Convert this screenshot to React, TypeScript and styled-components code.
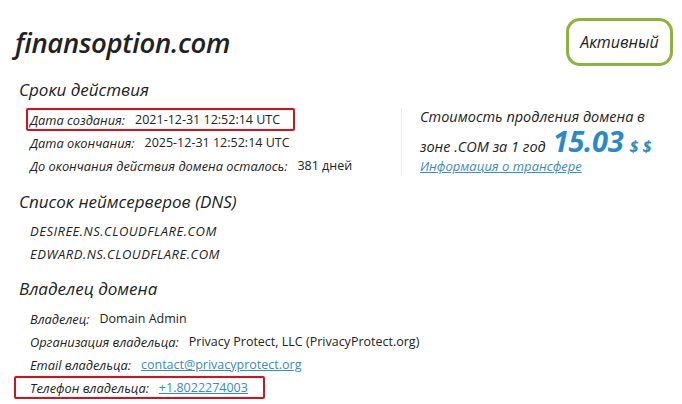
import styled, { createGlobalStyle } from 'styled-components';

const GlobalStyle = createGlobalStyle`
  html, body {
    margin: 0;
    padding: 0;
    background: #ffffff;
  }
  body {
    font-family: 'Open Sans', 'Liberation Sans', sans-serif;
    color: #222222;
  }
`;

const Page = styled.div`
  width: 682px;
  height: 404px;
  box-sizing: border-box;
  padding: 18px 9px 0 14px;
  overflow: hidden;
`;

const Header = styled.header`
  display: flex;
  justify-content: space-between;
  align-items: center;
  height: 48px;
`;

const DomainName = styled.h1`
  margin: 0 0 0 1px;
  font-size: 27.5px;
  font-weight: 600;
  font-style: italic;
  letter-spacing: -0.3px;
  color: #222222;
`;

const StatusBadge = styled.div`
  box-sizing: border-box;
  width: 107px;
  height: 48px;
  display: flex;
  align-items: center;
  justify-content: center;
  border: 3px solid #8cb33c;
  border-radius: 14px;
  font-size: 16px;
  font-style: italic;
  color: #222222;
`;

const SectionTitle = styled.h2<{ $gap: number }>`
  margin: ${(p) => p.$gap}px 0 0 5px;
  font-size: 17px;
  line-height: 24px;
  font-weight: 400;
  font-style: italic;
  color: #222222;
`;

const TermsRow = styled.div`
  display: flex;
  margin-top: 6px;
`;

const List = styled.div`
  width: 375px;
  margin-left: 12px;
  margin-top: 6px;
`;

const TermsList = styled(List)`
  margin-top: 0;
`;

const Row = styled.div<{ $mark?: 'tight' | 'wide' }>`
  display: flex;
  align-items: center;
  gap: 10px;
  width: fit-content;
  box-sizing: border-box;
  height: 23px;
  font-size: 12.5px;
  white-space: nowrap;
  padding-left: 4px;
  border: ${(p) => (p.$mark ? '2px solid #d3121f' : 'none')};
  border-radius: 2px;
  ${(p) => p.$mark === 'tight' && 'padding: 0 13px 0 2px;'}
  ${(p) => p.$mark === 'wide' && 'margin-left: -12px; padding: 0 15px 0 14px;'}
`;

const Label = styled.span`
  font-size: 12.8px;
  font-style: italic;
  color: #222222;
`;

const Value = styled.span`
  color: #222222;
`;

const ValueLink = styled.a`
  color: #3a8cc0;
  text-decoration: underline;
`;

const NsRow = styled.div`
  height: 22.5px;
  display: flex;
  align-items: center;
  padding-left: 4px;
  font-size: 13px;
  font-style: italic;
  letter-spacing: 0.5px;
`;

const PricePanel = styled.div`
  border-left: 1px solid #ececec;
  padding-left: 18px;
  height: 68px;
  font-size: 14.5px;
  font-style: italic;
  font-weight: 500;
  color: #222222;
`;

const PriceLine = styled.div<{ $tall?: boolean }>`
  display: flex;
  align-items: baseline;
  height: ${(p) => (p.$tall ? 29 : 18)}px;
  line-height: ${(p) => (p.$tall ? 29 : 18)}px;
  white-space: nowrap;
`;

const PriceAmount = styled.span`
  margin-left: 7px;
  font-size: 29px;
  line-height: 29px;
  font-weight: 700;
  color: #2b8ac6;
  letter-spacing: -0.3px;
`;

const Currency = styled.span`
  margin-left: 6px;
  font-size: 16px;
  font-weight: 700;
  color: #2b8ac6;
`;

const TransferLink = styled.a`
  display: block;
  line-height: 22px;
  font-size: 13px;
  color: #3a8cc0;
  text-decoration: underline;
`;

const App = () => {
  return (
    <>
      <GlobalStyle />
      <Page>
        <Header>
          <DomainName>finansoption.com</DomainName>
          <StatusBadge>Активный</StatusBadge>
        </Header>

        <SectionTitle $gap={12}>Сроки действия</SectionTitle>
        <TermsRow>
          <TermsList>
            <Row $mark="tight">
              <Label>Дата создания:</Label>
              <Value>2021-12-31 12:52:14 UTC</Value>
            </Row>
            <Row>
              <Label>Дата окончания:</Label>
              <Value>2025-12-31 12:52:14 UTC</Value>
            </Row>
            <Row>
              <Label>До окончания действия домена осталось:</Label>
              <Value>381 дней</Value>
            </Row>
          </TermsList>
          <PricePanel>
            <PriceLine>Стоимость продления домена в</PriceLine>
            <PriceLine $tall>
              зоне .COM за 1 год
              <PriceAmount>15.03</PriceAmount>
              <Currency>$ $</Currency>
            </PriceLine>
            <TransferLink href="#">Информация о трансфере</TransferLink>
          </PricePanel>
        </TermsRow>

        <SectionTitle $gap={13}>Список неймсерверов (DNS)</SectionTitle>
        <List>
          <NsRow>DESIREE.NS.CLOUDFLARE.COM</NsRow>
          <NsRow>EDWARD.NS.CLOUDFLARE.COM</NsRow>
        </List>

        <SectionTitle $gap={12}>Владелец домена</SectionTitle>
        <List>
          <Row>
            <Label>Владелец:</Label>
            <Value>Domain Admin</Value>
          </Row>
          <Row>
            <Label>Организация владельца:</Label>
            <Value>Privacy Protect, LLC (PrivacyProtect.org)</Value>
          </Row>
          <Row>
            <Label>Email владельца:</Label>
            <ValueLink href="#">contact@privacyprotect.org</ValueLink>
          </Row>
          <Row $mark="wide">
            <Label>Телефон владельца:</Label>
            <ValueLink href="#">+1.8022274003</ValueLink>
          </Row>
        </List>
      </Page>
    </>
  );
};

export default App;
